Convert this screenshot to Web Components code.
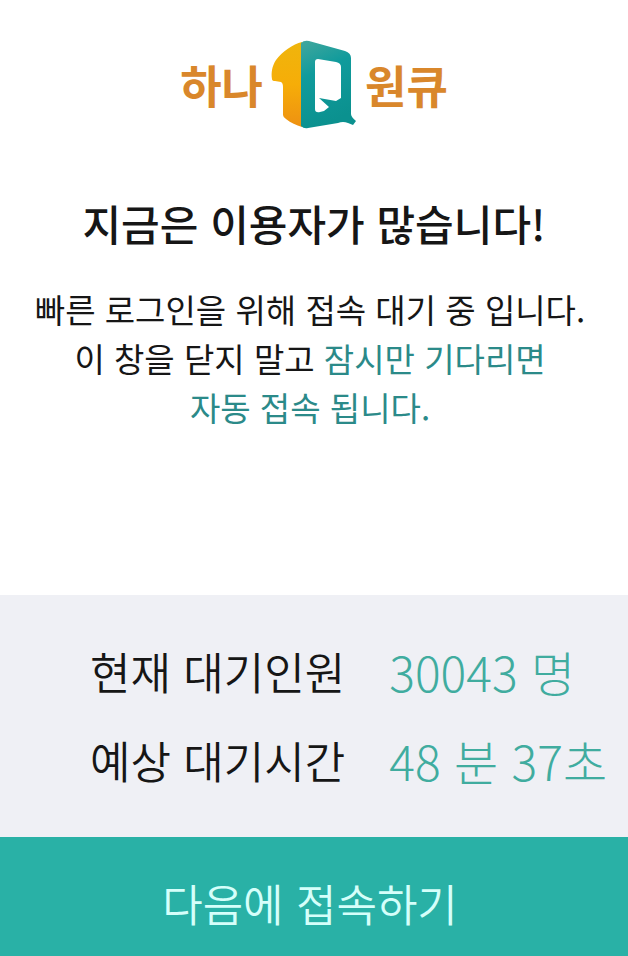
<!DOCTYPE html>
<html lang="ko">
<head>
<meta charset="utf-8">
<meta name="viewport" content="width=device-width, initial-scale=1">
<title>하나원큐 접속 대기</title>
<style>
  body {
    margin: 0;
    background: #fff;
    color: #161616;
    font-family: "Noto Sans CJK KR", sans-serif;
  }
</style>
</head>
<body>
<waiting-page>
  <brand-logo slot="header"></brand-logo>
  <waiting-message>
    <span slot="title">지금은 이용자가 많습니다!</span>
    빠른 로그인을 위해 접속 대기 중 입니다.<br>
    이 창을 닫지 말고 <em>잠시만 기다리면<br>
    자동 접속 됩니다.</em>
  </waiting-message>
  <queue-status slot="status" people="30043 명" time="48 분 37초"></queue-status>
  <leave-button slot="footer">다음에 접속하기</leave-button>
</waiting-page>

<script>
/**
 * Creates a template element.
 *
 * @param {string} html - The markup of the template.
 * @returns {HTMLTemplateElement} The template.
 */
const createTemplate = (html) => {
  const template = document.createElement('template')
  template.innerHTML = html
  return template
}

const pageTemplate = createTemplate(`
<style>
  :host {
    display: flex;
    flex-direction: column;
    min-height: 100vh;
  }

  header {
    display: flex;
    justify-content: center;
    padding-top: 40px;
  }

  main {
    flex: 1;
    padding: 61px 16px 48px;
  }
</style>
<header><slot name="header"></slot></header>
<main><slot></slot></main>
<slot name="status"></slot>
<slot name="footer"></slot>
`)

customElements.define('waiting-page',
  /**
   * Represents the whole waiting page.
   */
  class extends HTMLElement {
    constructor () {
      super()
      this.attachShadow({ mode: 'open' })
      this.shadowRoot.appendChild(pageTemplate.content.cloneNode(true))
    }
  }
)

const logoTemplate = createTemplate(`
<style>
  :host {
    display: flex;
    align-items: center;
    gap: 6px;
    color: #d9872b;
    font-size: 45px;
    font-weight: 700;
    line-height: 90px;
  }

  svg {
    display: block;
    width: 90px;
    height: 90px;
  }
</style>
<span>하나</span>
<svg viewBox="0 0 90 90" aria-hidden="true">
  <defs>
    <linearGradient id="one" x1="0" y1="0" x2="0" y2="1">
      <stop offset="0" stop-color="#efb50c"/>
      <stop offset="0.5" stop-color="#f6ad08"/>
      <stop offset="1" stop-color="#ee9112"/>
    </linearGradient>
    <linearGradient id="cube" x1="0" y1="0" x2="0.3" y2="1">
      <stop offset="0" stop-color="#43a79d"/>
      <stop offset="0.4" stop-color="#109b9c"/>
      <stop offset="1" stop-color="#0b918f"/>
    </linearGradient>
  </defs>
  <path fill="url(#one)" d="M33 2 C24 4 13 12 7 20 C3 26 2 33 3 39 Q3 41 6 41 L12 42 Q14 43 14 47 V75 Q14 77 17 79 C22 83 27 85 33 87 Z"/>
  <path fill="url(#cube)" fill-rule="evenodd" d="M32 3 Q35 0 40 1 L76 11 Q82 13 82 18 V74 Q82 77 87 81 L84 85 L79 83 Q74 81 69 83 L39 88 Q35 89 32 86 Z M46 22 V69 Q46 73 51 72 L55 71 L60 67 L50 58 L67 61 L72 58 V27 Q72 23 67 22 L49 19 Q46 19 46 22 Z"/>
</svg>
<span>원큐</span>
`)

customElements.define('brand-logo',
  /**
   * Represents the logo with the name on both sides.
   */
  class extends HTMLElement {
    constructor () {
      super()
      this.attachShadow({ mode: 'open' })
      this.shadowRoot.appendChild(logoTemplate.content.cloneNode(true))
    }
  }
)

const messageTemplate = createTemplate(`
<style>
  :host {
    display: block;
    text-align: center;
  }

  h1 {
    margin: 0 0 30px;
    font-size: 42px;
    font-weight: 500;
    line-height: 64px;
  }

  p {
    margin: 0;
    padding-right: 8px;
    font-size: 33px;
    line-height: 49px;
  }

  ::slotted(em) {
    color: #2b8a89;
    font-style: normal;
  }
</style>
<h1><slot name="title"></slot></h1>
<p><slot></slot></p>
`)

customElements.define('waiting-message',
  /**
   * Represents the heading and the text below it.
   */
  class extends HTMLElement {
    constructor () {
      super()
      this.attachShadow({ mode: 'open' })
      this.shadowRoot.appendChild(messageTemplate.content.cloneNode(true))
    }
  }
)

const statusTemplate = createTemplate(`
<style>
  :host {
    display: block;
    padding: 32px 16px 32px 90px;
    background: #eff0f5;
  }

  dl {
    display: grid;
    grid-template-columns: auto 1fr;
    column-gap: 44px;
    margin: 0;
    font-size: 44px;
    font-weight: 350;
    line-height: 89px;
    white-space: nowrap;
  }

  dd {
    margin: 0;
    color: #40ac9f;
    font-size: 48px;
    font-weight: 300;
  }
</style>
<dl>
  <dt>현재 대기인원</dt>
  <dd id="people"></dd>
  <dt>예상 대기시간</dt>
  <dd id="time"></dd>
</dl>
`)

customElements.define('queue-status',
  /**
   * Represents the number of people waiting and the expected time.
   */
  class extends HTMLElement {
    #people
    #time

    constructor () {
      super()
      this.attachShadow({ mode: 'open' })
      this.shadowRoot.appendChild(statusTemplate.content.cloneNode(true))

      this.#people = this.shadowRoot.getElementById('people')
      this.#time = this.shadowRoot.getElementById('time')
    }

    static get observedAttributes () {
      return ['people', 'time']
    }

    /**
     * Called when an observed attribute changes.
     *
     * @param {string} name - The name of the attribute.
     * @param {string} oldValue - The old value.
     * @param {string} newValue - The new value.
     */
    attributeChangedCallback (name, oldValue, newValue) {
      const target = name === 'people' ? this.#people : this.#time
      target.textContent = newValue
    }
  }
)

const buttonTemplate = createTemplate(`
<style>
  :host {
    display: block;
  }

  button {
    display: block;
    width: 100%;
    padding: 34px 24px 21px 16px;
    border: 0;
    background: #29b1a6;
    color: #d5fffa;
    font: inherit;
    font-size: 44px;
    font-weight: 350;
    line-height: 64px;
    cursor: pointer;
  }
</style>
<button type="button"><slot></slot></button>
`)

customElements.define('leave-button',
  /**
   * Represents the button at the bottom of the page.
   */
  class extends HTMLElement {
    constructor () {
      super()
      this.attachShadow({ mode: 'open' })
      this.shadowRoot.appendChild(buttonTemplate.content.cloneNode(true))
    }
  }
)
</script>
</body>
</html>
